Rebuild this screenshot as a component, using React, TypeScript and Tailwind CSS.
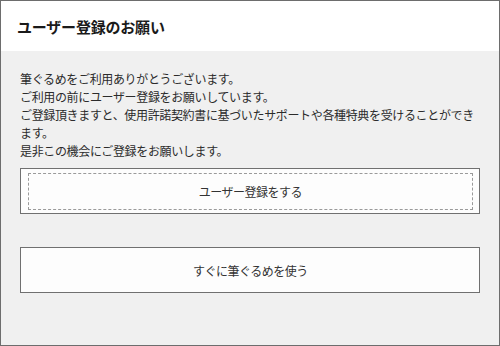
import React from "react";

const jp = { fontFamily: '"Noto Sans CJK JP", "Noto Sans", sans-serif' };

function DialogButton({ label, focused }: { label: string; focused?: boolean }) {
  return (
    <button
      type="button"
      className="flex h-[46px] w-[460px] border border-[#707070] bg-[#fdfdfd] pt-[4px] pr-[6px] pb-[3px] pl-[7px]"
    >
      <div
        className={
          "flex flex-1 items-center justify-center border border-dashed " +
          (focused ? "border-[#9a9a9a]" : "border-transparent")
        }
      >
        <span className="text-[12px] leading-[18px] tracking-[-0.5px] text-[#333333]">{label}</span>
      </div>
    </button>
  );
}

export default function App() {
  return (
    <div
      style={jp}
      className="flex h-[346px] w-[500px] flex-col border border-[#6d6d6d] bg-[#f0f0f0]"
    >
      <div className="flex h-[50px] items-center bg-white pl-[16px] pt-[1px]">
        <h1 className="text-[15px] font-bold leading-[20px] tracking-[-0.2px] text-[#1a1a1a]">
          ユーザー登録のお願い
        </h1>
      </div>
      <div className="flex flex-1 flex-col px-[19px] pt-[19px]">
        <p className="w-[460px] text-[12px] leading-[18px] tracking-[-0.35px] text-[#2b2b2b]">
          筆ぐるめをご利用ありがとうございます。
          <br />
          ご利用の前にユーザー登録をお願いしています。
          <br />
          ご登録頂きますと、使用許諾契約書に基づいたサポートや各種特典を受けることができます。
          <br />
          是非この機会にご登録をお願いします。
        </p>
        <div className="mt-[8px] flex flex-col gap-[33px]">
          <DialogButton label="ユーザー登録をする" focused />
          <DialogButton label="すぐに筆ぐるめを使う" />
        </div>
      </div>
    </div>
  );
}
